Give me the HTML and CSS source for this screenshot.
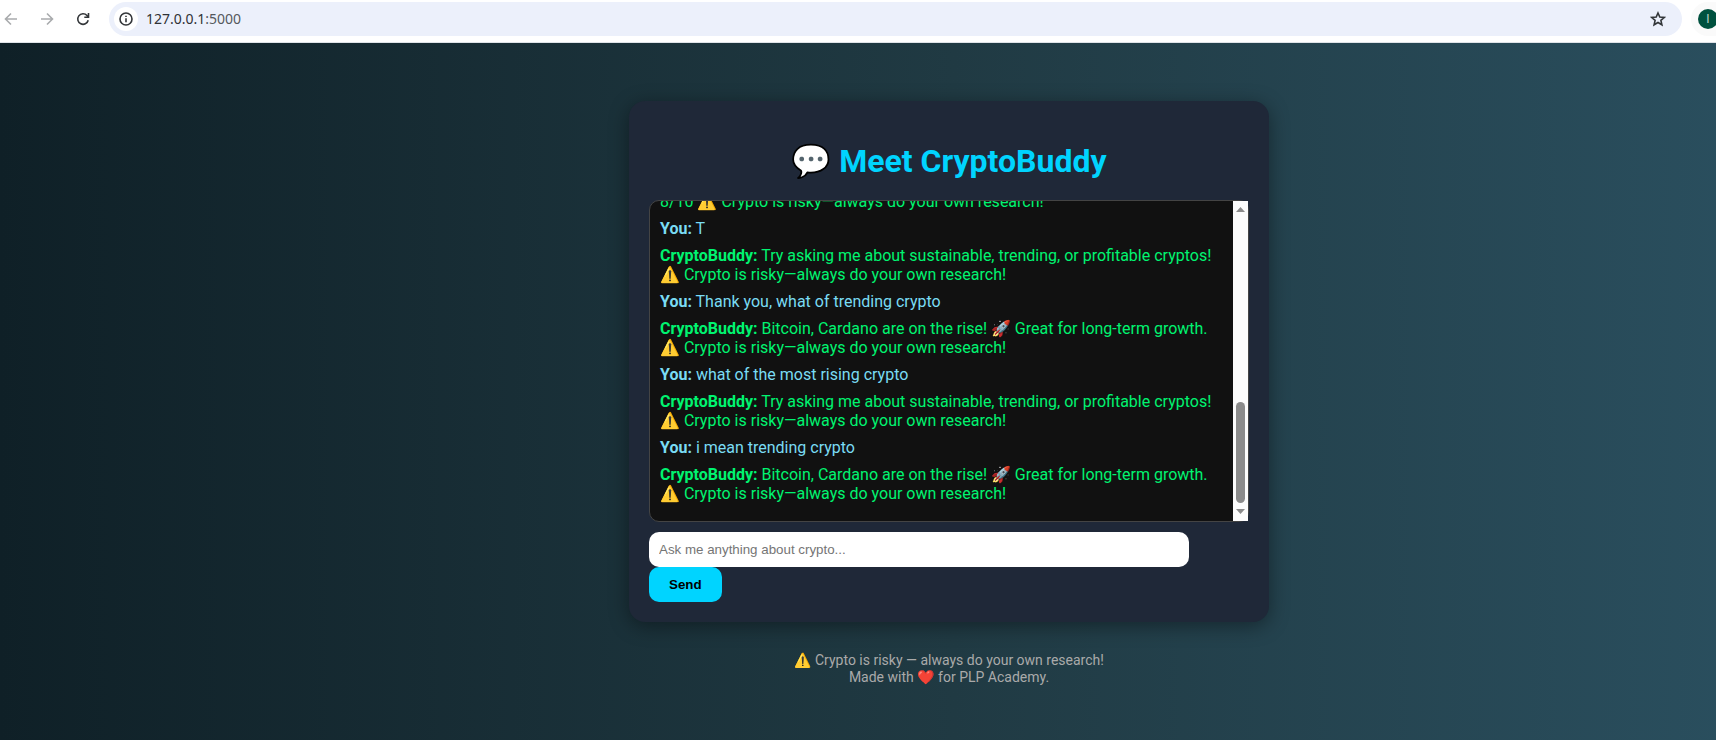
FILE: index.html
```html
<!DOCTYPE html>
<html lang="en">
<head>
<meta charset="utf-8">
<title>CryptoBuddy</title>
<link rel="stylesheet" href="styles.css">
</head>
<body>
<header class="browser-bar">
  <nav class="nav-buttons" aria-label="Browser navigation">
    <button class="nav-button disabled" type="button" aria-label="Back"><svg viewBox="0 0 16 16"><path d="M14 8H3M8 2.500L2.500 8L8 13.500"/></svg></button>
    <button class="nav-button disabled" type="button" aria-label="Forward"><svg viewBox="0 0 16 16"><path d="M2 8H13M8 2.500L13.500 8L8 13.500"/></svg></button>
    <button class="nav-button" type="button" aria-label="Reload"><svg viewBox="0 0 16 16"><path d="M13.200 9.300A5.300 5.300 0 1 1 12 4.500L13 5.500M13.500 2V6.200H9.300"/></svg></button>
  </nav>
  <div class="address-bar">
    <button class="site-info" type="button" aria-label="Site information"><svg viewBox="0 0 16 16"><circle cx="8" cy="8" r="6"/><path d="M8 7.300V11.200M8 4.700V6"/></svg></button>
    <span class="url">127.0.0.1<span class="port">:5000</span></span>
    <button class="bookmark" type="button" aria-label="Bookmark"><svg viewBox="0 0 16 16"><path d="M8 2L9.800 6.100L14.200 6.500L10.900 9.400L11.900 13.800L8 11.500L4.100 13.800L5.100 9.400L1.800 6.500L6.200 6.100Z"/></svg></button>
  </div>
  <button class="profile" type="button" aria-label="Profile"><span class="avatar">I</span></button>
</header>
<main class="page">
  <section class="card">
    <h1 class="title">💬 Meet CryptoBuddy</h1>
    <div class="chat">
      <div class="messages">
        <p class="message bot">8/10 ⚠️ Crypto is risky—always do your own research!</p>
        <p class="message user"><strong>You:</strong> T</p>
        <p class="message bot"><strong>CryptoBuddy:</strong> Try asking me about sustainable, trending, or profitable cryptos! ⚠️ Crypto is risky—always do your own research!</p>
        <p class="message user"><strong>You:</strong> Thank you, what of trending crypto</p>
        <p class="message bot"><strong>CryptoBuddy:</strong> Bitcoin, Cardano are on the rise! 🚀 Great for long-term growth. ⚠️ Crypto is risky—always do your own research!</p>
        <p class="message user"><strong>You:</strong> what of the most rising crypto</p>
        <p class="message bot"><strong>CryptoBuddy:</strong> Try asking me about sustainable, trending, or profitable cryptos! ⚠️ Crypto is risky—always do your own research!</p>
        <p class="message user"><strong>You:</strong> i mean trending crypto</p>
        <p class="message bot"><strong>CryptoBuddy:</strong> Bitcoin, Cardano are on the rise! 🚀 Great for long-term growth. ⚠️ Crypto is risky—always do your own research!</p>
      </div>
      <div class="scrollbar" aria-hidden="true">
        <svg class="arrow" viewBox="0 0 9 5"><path d="M0 5L4.500 0L9 5Z"/></svg>
        <div class="track"><div class="thumb"></div></div>
        <svg class="arrow" viewBox="0 0 9 5"><path d="M0 0L4.500 5L9 0Z"/></svg>
      </div>
    </div>
    <form class="ask">
      <input class="ask-input" type="text" placeholder="Ask me anything about crypto..." aria-label="Question">
      <button class="send" type="submit">Send</button>
    </form>
  </section>
  <footer class="footer">
    <p>⚠️ Crypto is risky — always do your own research!</p>
    <p>Made with ❤️ for PLP Academy.</p>
  </footer>
</main>
</body>
</html>
```
FILE: styles.css
```css
* {
  box-sizing: border-box;
}

body {
  margin: 0;
  min-height: 100vh;
  display: flex;
  flex-direction: column;
  font-family: Roboto, "Noto Color Emoji", sans-serif;
}

p {
  margin: 0;
}

.browser-bar {
  display: flex;
  align-items: center;
  height: 43px;
  padding: 2px 0 7px;
  background: #fff;
  border-bottom: 1px solid #dfe3e8;
}

.nav-buttons {
  display: flex;
  gap: 20px;
  margin: 0 18px 0 3px;
}

.nav-button,
.site-info,
.bookmark,
.profile {
  display: flex;
  align-items: center;
  justify-content: center;
  padding: 0;
  border: 0;
  background: none;
}

.nav-button {
  width: 16px;
}

.nav-button svg,
.site-info svg,
.bookmark svg {
  width: 16px;
  height: 16px;
  fill: none;
  stroke: #333639;
  stroke-width: 1.6;
  flex: none;
}

.nav-button.disabled svg {
  stroke: #a9abad;
}

.address-bar {
  flex: 1;
  display: flex;
  align-items: center;
  height: 34px;
  padding: 0 16px 0 5px;
  border-radius: 17px;
  background: #ecf0fb;
}

.site-info {
  width: 24px;
  height: 24px;
  border-radius: 12px;
  background: #fff;
}

.url {
  flex: 1;
  margin-left: 8px;
  font: 14px "Noto Sans", sans-serif;
  color: #303236;
}

.port {
  color: #55585d;
}

.profile {
  width: 25px;
  height: 34px;
  margin-left: 9px;
  padding-left: 7px;
  justify-content: flex-start;
  border-radius: 17px 0 0 17px;
  background: #fafafa;
  overflow: hidden;
}

.avatar {
  flex: none;
  width: 20px;
  height: 20px;
  border-radius: 10px;
  background: #00513f;
  color: #b9d3cb;
  font: 12px/20px Roboto, sans-serif;
  text-align: center;
}

.page {
  flex: 1;
  display: flex;
  flex-direction: column;
  align-items: center;
  padding: 58px 20px 48px 202px;
  background: linear-gradient(to right, #0f2027, #203a43, #2c5364) 0 0 / 111% 100%;
}

.card {
  width: 100%;
  max-width: 640px;
  padding: 20px;
  border-radius: 16px;
  background: #1f2838;
  box-shadow: 0 4px 20px rgba(0, 0, 0, 0.4);
}

.title {
  margin: 21px 0 19px;
  font-size: 32px;
  line-height: 39px;
  text-align: center;
  color: #00d4ff;
}

.chat {
  display: flex;
  height: 322px;
  border: 1px solid #444;
  border-radius: 10px;
  background: #111;
}

.messages {
  flex: 1;
  display: flex;
  flex-direction: column;
  justify-content: flex-end;
  padding: 10px;
  overflow: hidden;
}

.message {
  margin-bottom: 8px;
  font-size: 16px;
  line-height: 19px;
}

.user {
  color: #7adcf4;
}

.bot {
  color: #00f470;
}

.scrollbar {
  display: flex;
  flex-direction: column;
  align-items: center;
  gap: 6px;
  width: 15px;
  padding: 6px 0 7px;
  background: #fcfcfc;
}

.arrow {
  width: 9px;
  height: 5px;
  fill: #8b8b8b;
}

.track {
  flex: 1;
  display: flex;
  align-items: flex-end;
}

.thumb {
  width: 9px;
  height: 101px;
  border-radius: 5px;
  background: #8b8b8b;
}

.ask {
  margin-top: 10px;
}

.ask-input,
.send {
  display: block;
  height: 35px;
  border: 0;
  border-radius: 10px;
  font-family: "Liberation Sans", Arial, sans-serif;
}

.ask-input {
  width: 90%;
  padding: 10px;
  background: #fff;
}

.ask-input::placeholder {
  color: #757575;
}

.send {
  padding: 10px 20px;
  background: #00d4ff;
  color: #000;
  font-weight: bold;
}

.footer {
  margin-top: 30px;
  font-size: 14px;
  line-height: 17px;
  text-align: center;
  color: #aaa;
}
```
